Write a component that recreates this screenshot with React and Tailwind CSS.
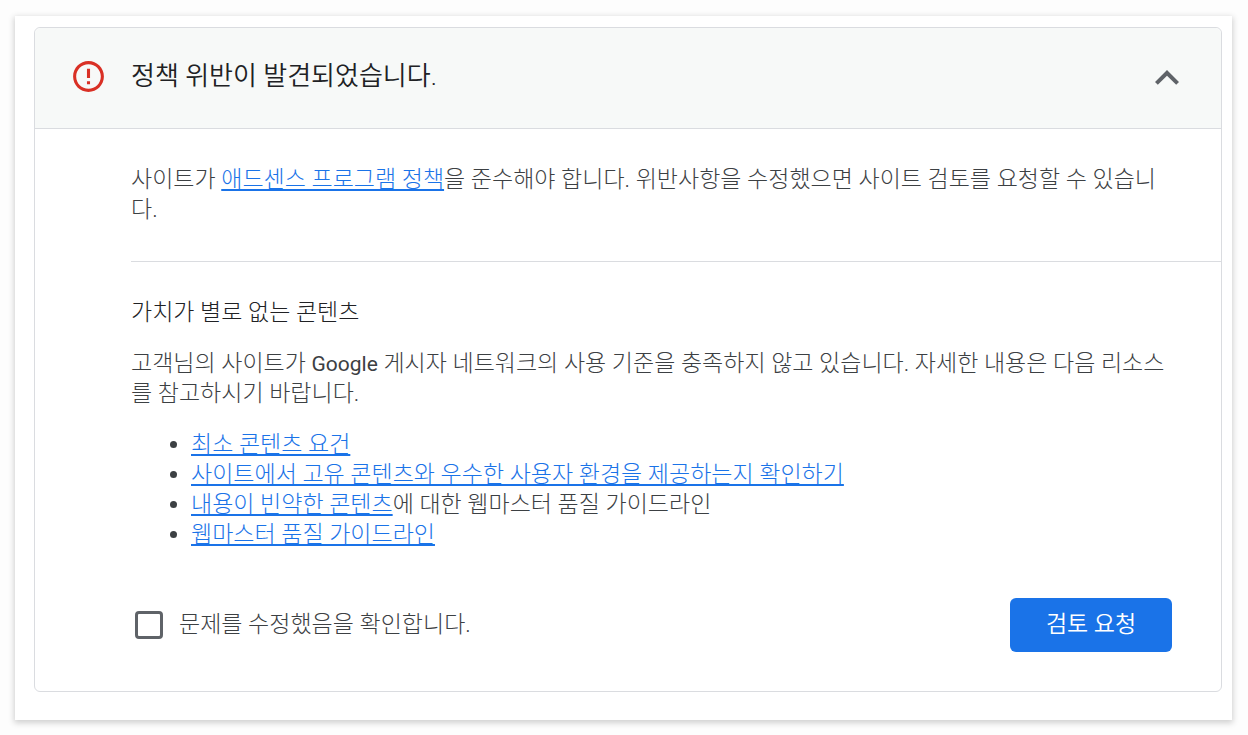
import React from 'react';

const linkClass =
  'text-[#1a73e8] underline decoration-2 underline-offset-2';

const resources = [
  { link: '최소 콘텐츠 요건', rest: '' },
  { link: '사이트에서 고유 콘텐츠와 우수한 사용자 환경을 제공하는지 확인하기', rest: '' },
  { link: '내용이 빈약한 콘텐츠', rest: '에 대한 웹마스터 품질 가이드라인' },
  { link: '웹마스터 품질 가이드라인', rest: '' },
];

function ErrorIcon() {
  return (
    <svg className="size-[37px] shrink-0 fill-[#d93025]" viewBox="0 0 24 24" aria-hidden="true">
      <path d="M11 15h2v2h-2zm0-8h2v6h-2zm.99-5C6.47 2 2 6.48 2 12s4.47 10 9.99 10C17.52 22 22 17.52 22 12S17.52 2 11.99 2zM12 20c-4.42 0-8-3.58-8-8s3.58-8 8-8 8 3.58 8 8-3.58 8-8 8z" />
    </svg>
  );
}

function CollapseIcon() {
  return (
    <svg className="size-12 fill-[#5f6368]" viewBox="0 0 24 24" aria-hidden="true">
      <path d="M12 8l-6 6 1.41 1.41L12 10.83l4.59 4.58L18 14z" />
    </svg>
  );
}

export default function App() {
  return (
    <div className="min-h-screen bg-[#fdfdfd] py-4 pl-[15px] pr-4 font-[Roboto,'Noto_Sans_CJK_KR',sans-serif] text-[23px] leading-[30px] font-light text-[#3c4043]">
      <main className="bg-white pt-[11px] pr-[10px] pb-7 pl-[19px] shadow-[0_2px_6px_1px_rgba(0,0,0,0.18)]">
        <section className="rounded-md border border-[#dadce0]">
          <header className="flex h-[101px] items-center rounded-t-md border-b border-[#dadce0] bg-[#f7f9f8] pl-[35px] pr-[30px]">
            <div className="flex flex-1 items-center gap-6 pb-1">
              <ErrorIcon />
              <h1 className="text-[26px] leading-8 font-[350] text-[#202124]">정책 위반이 발견되었습니다.</h1>
            </div>
            <button type="button" aria-label="접기" aria-expanded="true">
              <CollapseIcon />
            </button>
          </header>

          <div className="pt-9 pb-[39px] pl-24">
            <p className="pr-12">
              사이트가 <a href="#policy" className={linkClass}>애드센스 프로그램 정책</a>을 준수해야 합니다. 위반사항을 수정했으면 사이트 검토를 요청할 수 있습니다.
            </p>
            <hr className="my-9 border-[#dadce0]" />
            <div className="pr-[49px]">
              <h2 className="font-light text-[#202124]">가치가 별로 없는 콘텐츠</h2>
              <p className="mt-[21px]">
                고객님의 사이트가 <span className="text-[21px] font-normal">Google</span> 게시자 네트워크의 사용 기준을 충족하지 않고 있습니다. 자세한 내용은 다음 리소스를 참고하시기 바랍니다.
              </p>
              <ul className="mt-[21px] list-disc pl-[60px]">
                {resources.map((item) => (
                  <li key={item.link}>
                    <a href="#resource" className={linkClass}>{item.link}</a>
                    {item.rest}
                  </li>
                ))}
              </ul>
              <div className="mt-12 flex items-center justify-between">
                <label className="flex items-center gap-4 pl-1">
                  <input
                    type="checkbox"
                    className="size-7 appearance-none rounded-[4px] border-3 border-[#5f6368] checked:bg-[#1a73e8]"
                  />
                  <span>문제를 수정했음을 확인합니다.</span>
                </label>
                <button
                  type="button"
                  className="h-[54px] w-[162px] rounded-md bg-[#1a73e8] font-[350] text-white"
                >
                  검토 요청
                </button>
              </div>
            </div>
          </div>
        </section>
      </main>
    </div>
  );
}
